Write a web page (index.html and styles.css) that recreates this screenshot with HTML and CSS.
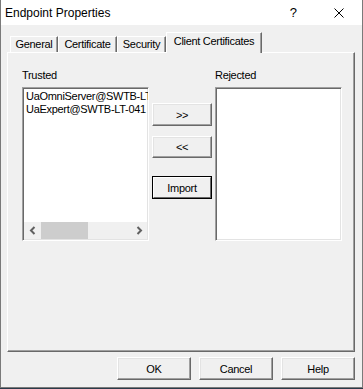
FILE: index.html
```html
<!DOCTYPE html>
<html>
<head>
<meta charset="utf-8">
<link rel="stylesheet" href="styles.css">
</head>
<body>
<div class="window">
  <div class="titlebar">
    <span class="title">Endpoint Properties</span>
    <span class="help-glyph">?</span>
    <svg class="close" width="10" height="10" viewBox="0 0 10 10"><path d="M0.5 0.5 L9.5 9.5 M9.5 0.5 L0.5 9.5" stroke="#000" stroke-width="1" fill="none"/></svg>
  </div>
  <div class="tabs">
    <div class="tab t1">General</div>
    <div class="tab t2">Certificate</div>
    <div class="tab t3">Security</div>
    <div class="tab selected">Client Certificates</div>
  </div>
  <div class="panel">
    <div class="grid">
      <div class="col">
        <div class="label">Trusted</div>
        <div class="listbox">
          <div class="items">
            <div class="item">UaOmniServer@SWTB-LT-041</div>
            <div class="item">UaExpert@SWTB-LT-041</div>
          </div>
          <div class="hscroll">
            <div class="arrow"><svg width="8" height="9" viewBox="0 0 8 9"><path d="M5.5 1 L2 4.5 L5.5 8" stroke="#606060" stroke-width="2" fill="none"/></svg></div>
            <div class="thumb"></div>
            <div class="track"></div>
            <div class="arrow"><svg width="8" height="9" viewBox="0 0 8 9"><path d="M2.5 1 L6 4.5 L2.5 8" stroke="#606060" stroke-width="2" fill="none"/></svg></div>
          </div>
        </div>
      </div>
      <div class="buttons">
        <div class="btn b1">&gt;&gt;</div>
        <div class="btn b2">&lt;&lt;</div>
        <div class="btn default b3"><span>Import</span></div>
      </div>
      <div class="col">
        <div class="label">Rejected</div>
        <div class="listbox"></div>
      </div>
    </div>
  </div>
  <div class="footer">
    <div class="btn wide">OK</div>
    <div class="btn wide">Cancel</div>
    <div class="btn wide">Help</div>
  </div>
</div>
</body>
</html>
```

FILE: styles.css
```css
html, body {
  margin: 0;
  padding: 0;
  background: #2b3a4a;
}
.window {
  width: 363px;
  height: 388px;
  box-sizing: border-box;
  border: 1px solid #7a7a7a;
  border-top: none;
  background: #f0f0f0;
  font-family: "Liberation Sans", Arial, sans-serif;
  font-size: 11px;
  letter-spacing: -0.3px;
  color: #000;
  display: flex;
  flex-direction: column;
}
.titlebar {
  height: 25px;
  background: #fff;
  display: flex;
  align-items: center;
  flex-shrink: 0;
  letter-spacing: 0;
}
.title {
  font-size: 12px;
  margin-left: 4px;
  flex: 1;
}
.help-glyph {
  font-size: 13px;
  margin-right: 37px;
}
.close {
  margin-right: 18px;
}
.tabs {
  height: 27px;
  display: flex;
  align-items: flex-end;
  padding-left: 9px;
  flex-shrink: 0;
  position: relative;
  z-index: 2;
}
.tab {
  height: 16px;
  box-sizing: border-box;
  border-top: 1px solid #fff;
  border-left: 1px solid #fff;
  border-right: 1px solid #696969;
  box-shadow: inset -1px 0 #a0a0a0;
  line-height: 14px;
  text-align: center;
  white-space: nowrap;
}
.t1 { width: 48px; }
.t2 { width: 59px; }
.t3 { width: 49px; }
.tab.selected {
  width: 96px;
  height: 21px;
  margin-bottom: -1px;
  line-height: 17px;
  background: #f0f0f0;
}
.panel {
  margin-left: 6px;
  width: 348px;
  height: 300px;
  box-sizing: border-box;
  border-top: 1px solid #fff;
  border-left: 1px solid #fff;
  border-right: 1px solid #696969;
  border-bottom: 1px solid #696969;
  box-shadow: inset -1px -1px #a0a0a0;
  padding: 16px 0 0 14px;
  flex-shrink: 0;
}
.grid {
  display: grid;
  grid-template-columns: 127px 60px 127px;
  column-gap: 3px;
}
.col {
  display: flex;
  flex-direction: column;
}
.label {
  height: 13px;
  line-height: 13px;
  margin-bottom: 5px;
}
.listbox {
  height: 154px;
  box-sizing: border-box;
  background: #fff;
  border: 1px solid;
  border-color: #a0a0a0 #fff #fff #a0a0a0;
  box-shadow: inset 1px 1px #696969, inset -1px -1px #e3e3e3;
  display: flex;
  flex-direction: column;
  overflow: hidden;
}
.items {
  flex: 1;
  padding: 2px 0 0 3px;
  white-space: nowrap;
  overflow: hidden;
}
.item {
  line-height: 13px;
}
.hscroll {
  height: 17px;
  margin: 0 1px 1px 1px;
  background: #f0f0f0;
  display: flex;
  align-items: stretch;
}
.arrow {
  width: 17px;
  display: flex;
  align-items: center;
  justify-content: center;
}
.thumb {
  width: 47px;
  background: #cdcdcd;
}
.track {
  flex: 1;
}
.buttons {
  display: flex;
  flex-direction: column;
  padding-top: 34px;
}
.btn {
  box-sizing: border-box;
  background: #f0f0f0;
  border: 1px solid;
  border-color: #fff #696969 #696969 #fff;
  box-shadow: inset -1px -1px #a0a0a0, inset 1px 1px #e3e3e3;
  display: flex;
  align-items: center;
  justify-content: center;
}
.b1 {
  height: 23px;
}
.b2 {
  height: 22px;
  margin-top: 10px;
}
.b3 {
  height: 23px;
  margin-top: 18px;
}
.btn.default {
  border: 1px solid #000;
  box-shadow: none;
  padding: 0;
}
.btn.default span {
  flex: 1;
  align-self: stretch;
  display: flex;
  align-items: center;
  justify-content: center;
  border: 1px solid;
  border-color: #fff #696969 #696969 #fff;
}
.footer {
  display: flex;
  justify-content: flex-end;
  gap: 8px;
  padding: 5px 7px 0 0;
}
.wide {
  width: 74px;
  height: 23px;
}
```
